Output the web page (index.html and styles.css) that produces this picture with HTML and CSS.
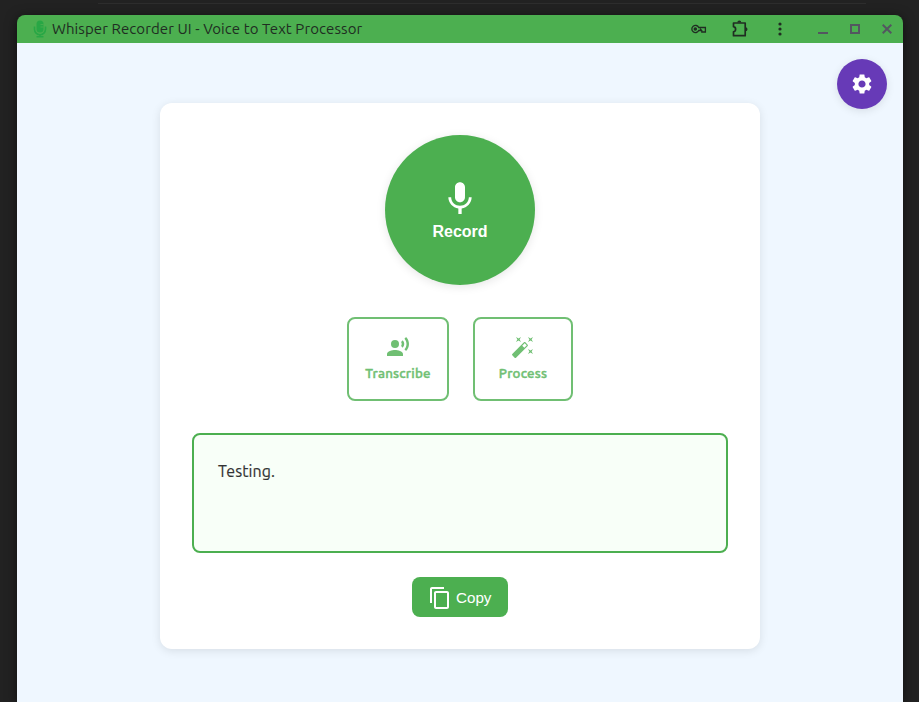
FILE: index.html
```html
<!DOCTYPE html>
<html lang="en">
<head>
<meta charset="utf-8">
<title>Whisper Recorder UI - Voice to Text Processor</title>
<link rel="stylesheet" href="styles.css">
</head>
<body>
<div class="backdrop-line"></div>
<div class="window">
  <header class="titlebar">
    <svg class="favicon" width="14" height="18" viewBox="0 0 14 18" fill="none" stroke="#28a745">
      <rect x="3.5" y="0.5" width="7" height="12" rx="3.5" fill="#28a745" stroke="none"/>
      <path d="M1.5 6.5v2.700a5.500 5.500 0 0 0 11 0V6.500M7 14v3M3.500 16.800h7" stroke-width="1.600"/>
      <path d="M7.500 4.500h3M7.500 7h3" stroke="#4caf50" stroke-width="0.800"/>
    </svg>
    <span class="title">Whisper Recorder UI - Voice to Text Processor</span>
    <div class="tools">
      <svg width="16" height="10" viewBox="0 0 16 10" fill="none" stroke="#202d22" stroke-width="1.300">
        <path d="M7.700 3.500A3.600 3.600 0 1 0 7.700 6.500H9.500V5.200L10.800 6.500V8H14.400V3.500Z"/>
        <circle cx="4.300" cy="5" r="1.100" fill="#202d22"/>
      </svg>
      <svg width="18" height="18" viewBox="0 0 18 18">
        <path d="M2.500 3H14.200V15.700H2.500V11.800C5.300 11.300 5.300 7.200 2.500 6.700Z" fill="none" stroke="#202d22" stroke-width="1.700" stroke-linejoin="round"/>
        <path d="M6.300 2.500a2 2 0 0 1 4 0zM14.500 7.300a2 2 0 0 1 0 4z" fill="#202d22"/>
      </svg>
      <svg width="4" height="14" viewBox="0 0 4 14" fill="#202d22"><circle cx="2" cy="2" r="1.600"/><circle cx="2" cy="7" r="1.600"/><circle cx="2" cy="12" r="1.600"/></svg>
    </div>
    <div class="controls">
      <svg width="10" height="10" viewBox="0 0 10 10"><path d="M0 9h10" stroke="#535760" stroke-width="2"/></svg>
      <svg width="10" height="10" viewBox="0 0 10 10"><path d="M1 1h8v8H1z" fill="none" stroke="#535760" stroke-width="2"/></svg>
      <svg width="10" height="10" viewBox="0 0 10 10"><path d="M.7.700l8.600 8.600M9.300.700L.700 9.300" stroke="#535760" stroke-width="2"/></svg>
    </div>
  </header>
  <main class="page">
    <button class="settings" aria-label="Settings">
      <svg width="24" height="24" viewBox="0 0 24 24" fill="currentColor"><path d="M19.140 12.940c.040-.300.060-.610.060-.940 0-.320-.020-.640-.070-.940l2.030-1.580c.180-.140.230-.410.120-.610l-1.920-3.320c-.120-.220-.370-.290-.590-.220l-2.390.960c-.500-.380-1.030-.700-1.620-.940l-.360-2.540c-.040-.240-.240-.410-.480-.410h-3.840c-.240 0-.430.170-.470.410l-.360 2.540c-.590.240-1.130.570-1.620.940l-2.390-.960c-.220-.080-.470 0-.590.220L2.740 8.870c-.120.210-.080.470.120.610l2.030 1.580c-.050.300-.090.630-.090.940s.020.640.070.940l-2.030 1.580c-.180.140-.230.410-.120.610l1.920 3.320c.120.220.370.290.590.220l2.390-.960c.500.380 1.030.700 1.620.940l.360 2.540c.050.240.240.410.480.410h3.840c.240 0 .440-.170.470-.410l.360-2.540c.590-.240 1.130-.560 1.620-.940l2.390.960c.220.080.470 0 .590-.220l1.920-3.320c.120-.220.070-.470-.120-.610l-2.010-1.580zM12 15.600c-1.980 0-3.600-1.620-3.600-3.600s1.620-3.600 3.600-3.600 3.600 1.620 3.600 3.600-1.620 3.600-3.600 3.600z"/></svg>
    </button>
    <section class="card">
      <button class="record">
        <svg width="40" height="40" viewBox="0 0 24 24" fill="currentColor"><path d="M12 14c1.660 0 2.990-1.340 2.990-3L15 5c0-1.660-1.340-3-3-3S9 3.340 9 5v6c0 1.660 1.340 3 3 3zm5.300-3c0 3-2.540 5.100-5.300 5.100S6.700 14 6.700 11H5c0 3.410 2.720 6.230 6 6.720V21h2v-3.280c3.280-.480 6-3.300 6-6.720h-1.700z"/></svg>
        <span>Record</span>
      </button>
      <div class="actions">
        <button class="action transcribe">
          <svg width="24" height="24" viewBox="0 0 24 24" fill="currentColor"><circle cx="9" cy="9" r="4"/><path d="M9 15c-2.670 0-8 1.340-8 4v2h16v-2c0-2.660-5.330-4-8-4zm7.760-9.640l-1.680 1.690c.840 1.180.840 2.710 0 3.890l1.680 1.690c2.020-2.020 2.020-5.070 0-7.270zM20.070 2l-1.630 1.630c2.770 3.020 2.770 7.560 0 10.740L20.070 16c3.900-3.890 3.910-9.950 0-14z"/></svg>
          <span>Transcribe</span>
        </button>
        <button class="action process">
          <svg width="24" height="24" viewBox="0 0 24 24" fill="currentColor"><path d="M7.500 5.600L10 7 8.600 4.500 10 2 7.500 3.400 5 2l1.400 2.500L5 7zm12 9.800L17 14l1.400 2.500L17 19l2.500-1.400L22 19l-1.400-2.500L22 14zM22 2l-2.500 1.400L17 2l1.400 2.500L17 7l2.500-1.400L22 7l-1.400-2.500zm-7.630 5.290c-.390-.390-1.020-.390-1.410 0L1.290 18.960c-.390.390-.390 1.020 0 1.410l2.340 2.340c.390.390 1.020.390 1.410 0L16.700 11.050c.390-.390.390-1.020 0-1.410l-2.330-2.350zm-1.030 5.490l-2.120-2.120 2.440-2.440 2.120 2.120-2.440 2.440z"/></svg>
          <span>Process</span>
        </button>
      </div>
      <div class="output"><span>Testing.</span></div>
      <button class="copy">
        <svg width="24" height="24" viewBox="0 0 24 24" fill="currentColor"><path d="M16 1H4c-1.100 0-2 .900-2 2v14h2V3h12V1zm3 4H8c-1.100 0-2 .900-2 2v14c0 1.100.900 2 2 2h11c1.100 0 2-.900 2-2V7c0-1.100-.900-2-2-2zm0 16H8V7h11v14z"/></svg>
        <span>Copy</span>
      </button>
    </section>
  </main>
</div>
</body>
</html>
```
FILE: styles.css
```css
* { box-sizing: border-box; }
html, body { height: 100%; }
body {
  margin: 0;
  padding: 15px 16px 0 17px;
  background: #222;
  overflow: hidden;
  font-family: Ubuntu, "Noto Sans", sans-serif;
}
button { border: 0; margin: 0; padding: 0; cursor: pointer; }
svg { display: block; flex: none; }
.backdrop-line {
  position: absolute;
  top: 3px;
  left: 98px;
  width: 768px;
  height: 1px;
  background: #2e2e2e;
}
.window {
  position: relative;
  height: 100%;
  display: flex;
  flex-direction: column;
  border-radius: 8px 8px 0 0;
  overflow: hidden;
  box-shadow: 0 2px 12px rgba(0, 0, 0, .55);
}
.titlebar {
  flex: none;
  height: 28px;
  display: flex;
  align-items: center;
  padding: 0 11px 0 16px;
  background: #4caf50;
  color: #202d22;
}
.favicon { margin-right: 5px; margin-top: -1px; }
.title {
  font-size: 15px;
  line-height: 28px;
  letter-spacing: 0.09px;
  white-space: nowrap;
}
.tools { display: flex; align-items: center; margin-left: auto; }
.tools svg:nth-child(1) { margin-right: 24px; }
.tools svg:nth-child(2) { margin-right: 29px; }
.controls { display: flex; gap: 22px; margin-left: 36px; }
.page {
  position: relative;
  flex: 1;
  padding-top: 60px;
  background: #eff7ff;
}
.settings {
  position: absolute;
  top: 16px;
  right: 16px;
  width: 50px;
  height: 50px;
  display: flex;
  align-items: center;
  justify-content: center;
  border-radius: 50%;
  background: #673ab7;
  color: #fff;
  box-shadow: 0 2px 8px rgba(0, 0, 0, .1);
}
.card {
  width: 600px;
  height: 546px;
  margin: 0 auto;
  padding: 32px;
  display: flex;
  flex-direction: column;
  align-items: center;
  border-radius: 12px;
  background: #fff;
  box-shadow: 0 2px 10px rgba(0, 0, 0, .1);
}
.record {
  width: 150px;
  height: 150px;
  display: flex;
  flex-direction: column;
  align-items: center;
  justify-content: center;
  gap: 4px;
  padding-bottom: 1px;
  border-radius: 50%;
  background: #4caf50;
  color: #fff;
  font: bold 16px/18px "Liberation Sans", sans-serif;
  box-shadow: 0 2px 10px rgba(0, 0, 0, .1);
}
.actions { display: flex; gap: 24px; margin: 32px 0; }
.action {
  height: 84px;
  display: flex;
  flex-direction: column;
  align-items: center;
  padding-top: 16px;
  gap: 6px;
  border: 2px solid #70bf73;
  border-radius: 8px;
  background: #fff;
  color: #70bf73;
  font: 500 13.333px/18px Ubuntu, "Noto Sans", sans-serif;
  letter-spacing: 0.2px;
  -webkit-text-stroke: 0.45px #70bf73;
}
.transcribe { width: 102px; }
.process { width: 100px; }
.output {
  width: 100%;
  height: 120px;
  padding: 24px;
  border: 2px solid #4caf50;
  border-radius: 8px;
  background: #f8fff8;
  color: #333;
  font-size: 16px;
  line-height: 24px;
  letter-spacing: 0.1px;
  -webkit-text-stroke: 0.15px #333;
}
.copy {
  width: 96px;
  height: 40px;
  margin-top: 24px;
  display: flex;
  align-items: center;
  padding: 2px 0 0 16px;
  gap: 4px;
  border-radius: 8px;
  background: #4caf50;
  color: #fff;
  font: 15.2px/18px "Liberation Sans", sans-serif;
}
```
